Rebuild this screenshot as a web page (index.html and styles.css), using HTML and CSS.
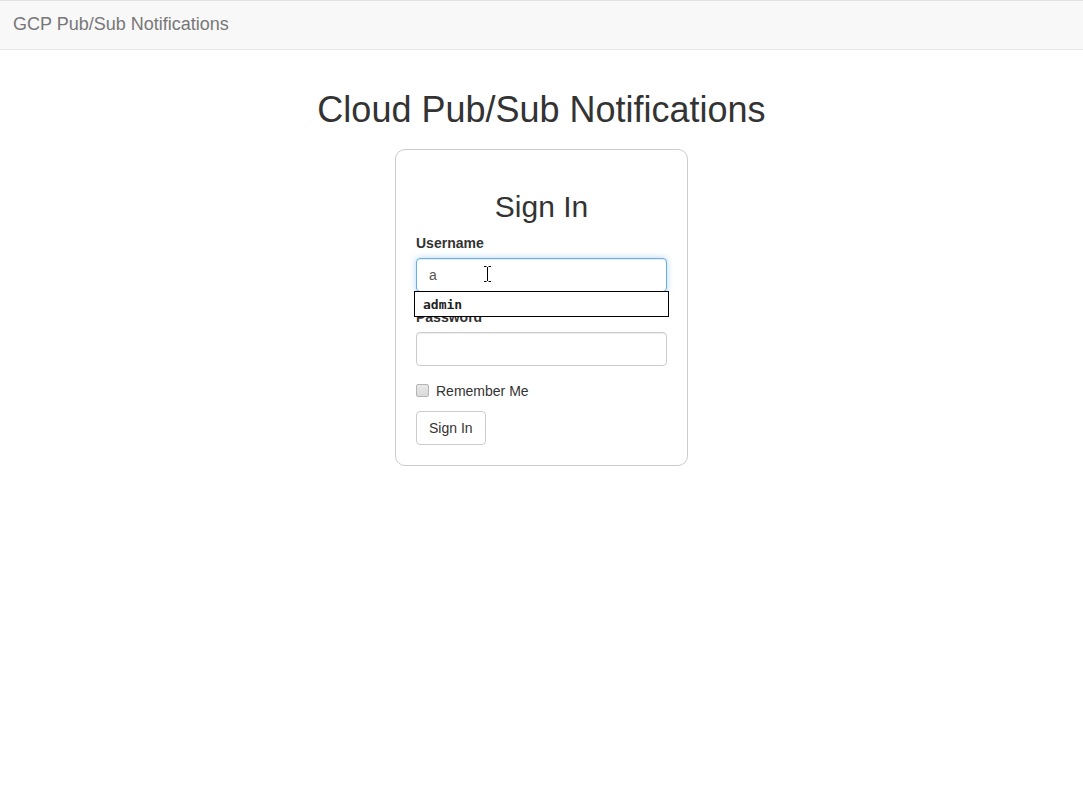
FILE: index.html
```html
<!DOCTYPE html>
<html>
<head>
<meta charset="utf-8">
<title>Cloud Pub/Sub Notifications</title>
<link rel="stylesheet" href="styles.css">
</head>
<body>
<nav class="navbar">
  <a class="brand" href="#">GCP Pub/Sub Notifications</a>
</nav>
<main class="container">
  <h1 class="title">Cloud Pub/Sub Notifications</h1>
  <div class="card">
    <h2 class="card-title">Sign In</h2>
    <form class="form">
      <div class="form-group username-group">
        <label class="label" for="username">Username</label>
        <input class="input focused" id="username" type="text" value="a">
        <div class="autocomplete"><span class="suggestion">admin</span></div>
        <svg class="ibeam" width="9" height="18" viewBox="0 0 9 18">
          <path d="M1 1.5h2.5M5.5 1.5H8M4.5 2v14M1 16.5h2.5M5.5 16.5H8" stroke="#fff" stroke-width="3" fill="none"/>
          <path d="M1 1.5h2.5M5.5 1.5H8M4.5 2v14M1 16.5h2.5M5.5 16.5H8" stroke="#000" stroke-width="1" fill="none"/>
        </svg>
      </div>
      <div class="form-group">
        <label class="label" for="password">Password</label>
        <input class="input" id="password" type="password">
      </div>
      <div class="checkbox">
        <label class="check-label"><input class="check" type="checkbox"> Remember Me</label>
      </div>
      <button class="btn" type="button">Sign In</button>
    </form>
  </div>
</main>
</body>
</html>
```

FILE: styles.css
```css
* { box-sizing: border-box; }
html, body { margin: 0; padding: 0; }
body {
  font-family: "Liberation Sans", Arial, sans-serif;
  font-size: 14px;
  line-height: 20px;
  color: #333;
  background: #fff;
}
.navbar {
  height: 50px;
  background: #f8f8f8;
  border-top: 1px solid #e2e2e2;
  border-bottom: 1px solid #e7e7e7;
  display: flex;
  align-items: center;
  padding: 0 13px;
  margin-bottom: 20px;
}
.brand {
  font-size: 18px;
  line-height: 20px;
  color: #777;
  text-decoration: none;
  margin-top: -2px;
}
.container {
  display: flex;
  flex-direction: column;
  align-items: center;
}
.title {
  font-size: 36px;
  font-weight: 400;
  line-height: 39.6px;
  margin: 20px 0 19px;
  color: #333;
}
.card {
  width: 293px;
  border: 1px solid #ccc;
  border-radius: 10px;
  padding: 20px;
}
.card-title {
  font-size: 30px;
  font-weight: 400;
  line-height: 33px;
  text-align: center;
  margin: 20px 0 10px;
}
.form-group {
  margin-bottom: 15px;
  display: flex;
  flex-direction: column;
}
.username-group { position: relative; }
.label {
  font-weight: 700;
  margin-bottom: 5px;
}
.input {
  height: 34px;
  width: 100%;
  padding: 6px 12px;
  font-family: "Liberation Sans", Arial, sans-serif;
  font-size: 14px;
  color: #555;
  border: 1px solid #ccc;
  border-radius: 4px;
  box-shadow: inset 0 1px 1px rgba(0,0,0,.075);
  outline: none;
}
.input.focused {
  border-color: #66afe9;
  box-shadow: inset 0 1px 1px rgba(0,0,0,.075), 0 0 6px rgba(102,175,233,.5);
}
.autocomplete {
  position: absolute;
  left: -2px;
  right: -2px;
  top: 58px;
  height: 26px;
  background: #fff;
  border: 1px solid #000;
  padding: 0 8px;
  display: flex;
  align-items: center;
  z-index: 2;
}
.suggestion {
  font-family: "DejaVu Sans Mono", "Liberation Mono", monospace;
  font-weight: 700;
  font-size: 13px;
  color: #222;
  padding-top: 2px;
}
.ibeam {
  position: absolute;
  left: 67px;
  top: 32px;
  z-index: 3;
}
.checkbox {
  margin-bottom: 10px;
}
.check-label {
  display: flex;
  align-items: center;
  font-weight: 400;
  min-height: 20px;
}
.check {
  appearance: none;
  -webkit-appearance: none;
  width: 13px;
  height: 13px;
  margin: 0 7px 0 0;
  border: 1px solid #b5b5b5;
  border-radius: 2px;
  background: linear-gradient(#e9e9e9, #d9d9d9);
}
.btn {
  height: 34px;
  padding: 6px 12px;
  font-family: "Liberation Sans", Arial, sans-serif;
  font-size: 14px;
  line-height: 20px;
  color: #333;
  background: #fff;
  border: 1px solid #ccc;
  border-radius: 4px;
}
```
